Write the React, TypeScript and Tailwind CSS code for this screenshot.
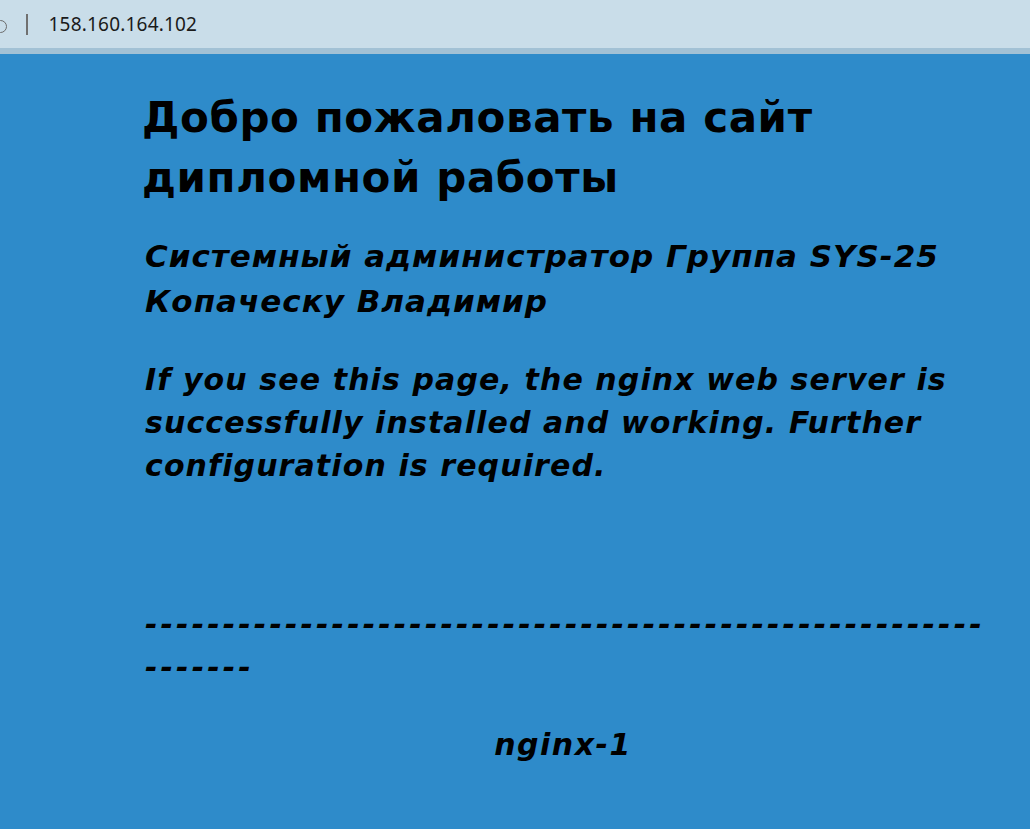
import React from "react";

const pageFont = { fontFamily: '"DejaVu Sans", Verdana, sans-serif' };

function AddressBar() {
  return (
    <div className="h-[54px] bg-[#c9dde9] border-b-[6px] border-[#a2c1d5] flex items-center relative overflow-hidden">
      {/* clipped icon on the left edge */}
      <div className="absolute left-[-6px] top-[20px] w-[13px] h-[13px] rounded-full border-[1.5px] border-[#6b6b6b]" />
      <div className="ml-[26px] w-[1.5px] h-[21px] bg-[#707070]" />
      <span
        className="ml-[21px] text-[19px] text-[#1a1a1a] tracking-[0.2px]"
        style={{ fontFamily: '"Noto Sans", "Open Sans", sans-serif' }}
      >
        158.160.164.102
      </span>
    </div>
  );
}

export default function App() {
  return (
    <div className="min-h-[829px] bg-[#2e8bca]">
      <AddressBar />
      <main className="w-[842px] ml-[142px] text-black whitespace-nowrap" style={pageFont}>
        <h1 className="mt-[34px] text-[42px] leading-[60px] font-bold tracking-[0.6px]">
          Добро пожаловать на сайт
          <br />
          дипломной работы
        </h1>
        <h2 className="mt-[26px] ml-[3px] text-[31px] leading-[45px] font-bold italic tracking-[1px]">
          Системный администратор Группа SYS-25
          <br />
          Копаческу Владимир
        </h2>
        <p className="mt-[34px] ml-[3px] text-[30px] leading-[43px] font-bold italic tracking-[1.1px]">
          If you see this page, the nginx web server is
          <br />
          successfully installed and working. Further
          <br />
          configuration is required.
        </p>
        <p className="mt-[116px] ml-[3px] text-[30px] leading-[43px] font-bold italic tracking-[3.1px]">
          ------------------------------------------------------
          <br />
          -------
        </p>
        <p className="mt-[34px] text-[30px] leading-[43px] font-bold italic text-center tracking-[1.5px]">
          nginx-1
        </p>
      </main>
    </div>
  );
}
